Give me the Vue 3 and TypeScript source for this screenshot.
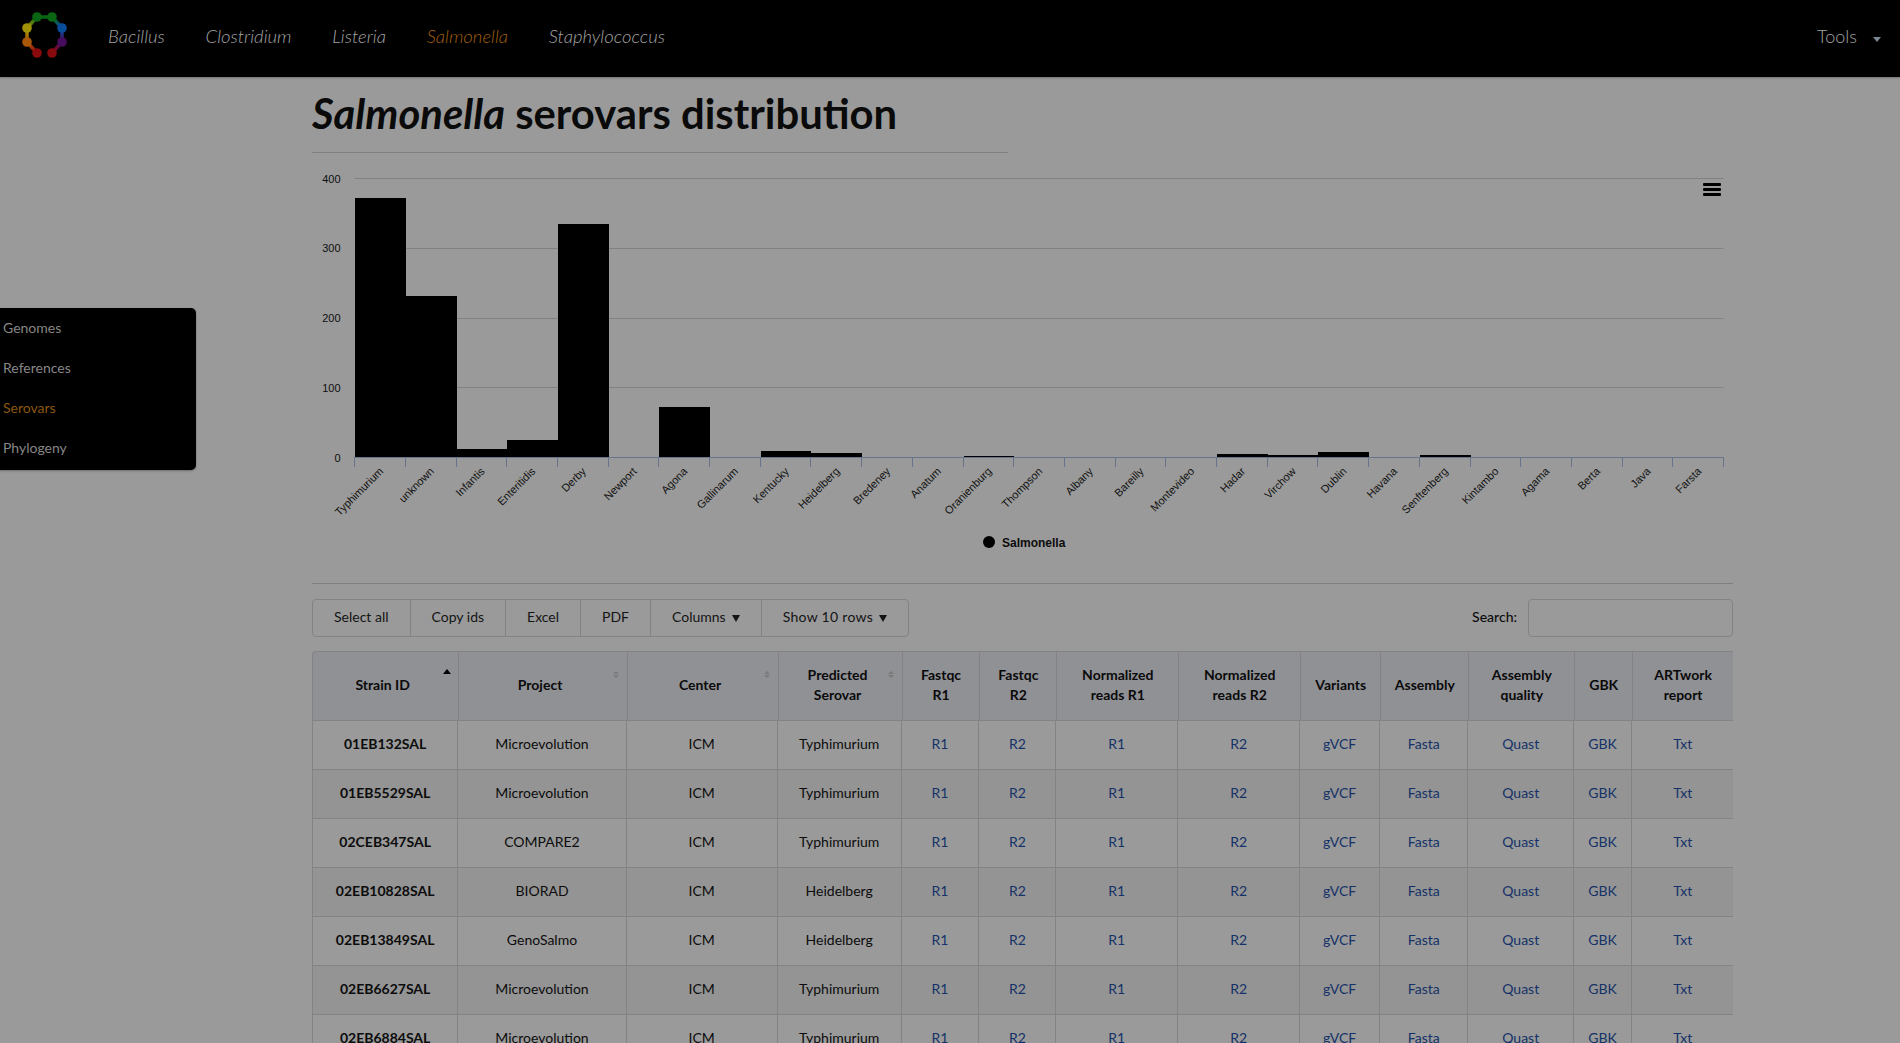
<script setup lang="ts">
interface Row { id: string; project: string; serovar: string }
interface Head { label: string[]; sort?: 'asc' | 'both' }
interface Tool { label: string; caret?: boolean }

const navLinks = ['Bacillus', 'Clostridium', 'Listeria', 'Salmonella', 'Staphylococcus']
const sideLinks = ['Genomes', 'References', 'Serovars', 'Phylogeny']

const logoPoints = [
  { x: 37, y: 52, c: '#8a0a0c' },
  { x: 27, y: 41, c: '#a85808' },
  { x: 27, y: 27, c: '#a09208' },
  { x: 37, y: 16, c: '#0a6612' },
  { x: 52, y: 16, c: '#0a6612' },
  { x: 62, y: 27, c: '#0a4c9c' },
  { x: 62, y: 41, c: '#460c5e' },
  { x: 52, y: 52, c: '#860a0e' }
]
const logoSegs = logoPoints.slice(0, -1).map((p, i) => ({ a: p, b: logoPoints[i + 1], id: 'lg' + i }))

const cats: [string, number][] = [
  ['Typhimurium', 372], ['unknown', 231], ['Infantis', 11], ['Enteritidis', 24], ['Derby', 334],
  ['Newport', 0], ['Agona', 71], ['Gallinarum', 0], ['Kentucky', 8], ['Heidelberg', 6],
  ['Bredeney', 0], ['Anatum', 0], ['Oranienburg', 2], ['Thompson', 0], ['Albany', 0],
  ['Bareilly', 0], ['Montevideo', 0], ['Hadar', 5], ['Virchow', 3], ['Dublin', 7],
  ['Havana', 0], ['Senftenberg', 3], ['Kintambo', 0], ['Agama', 0], ['Berta', 0],
  ['Java', 0], ['Farsta', 0]
]
const x0 = 42.6
const barX0 = 43.1
const step = 50.7
const y0 = 291
const axisY = 291
const unit = 0.6975
const chartW = 1420
const grid = [100, 200, 300, 400]
const yLabels = [0, 100, 200, 300, 400]
const edge = (i: number): number => Math.round(barX0 + i * step)
const gridY = (v: number): number => Math.round(y0 - v * unit) + 0.5
const ticks = Array.from({ length: cats.length + 1 }, (_, i) => edge(i) - 0.5)
const bars = cats.map((c, i) => {
  const top = Math.round(y0 - c[1] * unit)
  return { name: c[0], x: edge(i), w: edge(i + 1) - edge(i), y: top, h: axisY - top, cx: x0 + (i + 0.5) * step + 4 }
})

const tools: Tool[] = [
  { label: 'Select all' },
  { label: 'Copy ids' },
  { label: 'Excel' },
  { label: 'PDF' },
  { label: 'Columns', caret: true },
  { label: 'Show 10 rows', caret: true }
]

const heads: Head[] = [
  { label: ['Strain ID'], sort: 'asc' },
  { label: ['Project'], sort: 'both' },
  { label: ['Center'], sort: 'both' },
  { label: ['Predicted', 'Serovar'], sort: 'both' },
  { label: ['Fastqc', 'R1'] },
  { label: ['Fastqc', 'R2'] },
  { label: ['Normalized', 'reads R1'] },
  { label: ['Normalized', 'reads R2'] },
  { label: ['Variants'] },
  { label: ['Assembly'] },
  { label: ['Assembly', 'quality'] },
  { label: ['GBK'] },
  { label: ['ARTwork', 'report'] }
]
const links = ['R1', 'R2', 'R1', 'R2', 'gVCF', 'Fasta', 'Quast', 'GBK', 'Txt']
const rows: Row[] = [
  { id: '01EB132SAL', project: 'Microevolution', serovar: 'Typhimurium' },
  { id: '01EB5529SAL', project: 'Microevolution', serovar: 'Typhimurium' },
  { id: '02CEB347SAL', project: 'COMPARE2', serovar: 'Typhimurium' },
  { id: '02EB10828SAL', project: 'BIORAD', serovar: 'Heidelberg' },
  { id: '02EB13849SAL', project: 'GenoSalmo', serovar: 'Heidelberg' },
  { id: '02EB6627SAL', project: 'Microevolution', serovar: 'Typhimurium' },
  { id: '02EB6884SAL', project: 'Microevolution', serovar: 'Typhimurium' }
]
</script>

<template>
  <div class="page">
    <header class="navbar">
      <svg class="logo" width="90" height="70" viewBox="0 0 90 70">
        <defs>
          <linearGradient v-for="s in logoSegs" :id="s.id" :key="s.id" gradientUnits="userSpaceOnUse" :x1="s.a.x" :y1="s.a.y" :x2="s.b.x" :y2="s.b.y">
            <stop offset="0" :stop-color="s.a.c" />
            <stop offset="1" :stop-color="s.b.c" />
          </linearGradient>
        </defs>
        <line v-for="s in logoSegs" :key="s.id + 'l'" :x1="s.a.x" :y1="s.a.y" :x2="s.b.x" :y2="s.b.y" :stroke="`url(#${s.id})`" stroke-width="3.5" />
        <circle v-for="p in logoPoints" :key="p.x + '-' + p.y" :cx="p.x" :cy="p.y" r="4.8" :fill="p.c" />
      </svg>
      <nav class="nav-links">
        <a v-for="l in navLinks" :key="l" class="nav-link" :class="{ active: l === 'Salmonella' }">{{ l }}</a>
      </nav>
      <div class="tools">
        <span>Tools</span>
        <i class="caret"></i>
      </div>
    </header>

    <aside class="sidebar">
      <a v-for="s in sideLinks" :key="s" class="side-link" :class="{ active: s === 'Serovars' }">{{ s }}</a>
    </aside>

    <main class="content">
      <div class="title-block">
        <h1 class="title"><em>Salmonella</em> serovars distribution</h1>
      </div>

      <svg class="chart" :width="chartW" height="400" :viewBox="`0 0 ${chartW} 400`">
        <line v-for="g in grid" :key="g" :x1="x0" :x2="1411.5" :y1="gridY(g)" :y2="gridY(g)" stroke="#828282" stroke-width="1" />
        <text v-for="l in yLabels" :key="'y' + l" class="ylab" x="28.5" :y="292 - l * unit + 3.5" text-anchor="end">{{ l }}</text>
        <rect v-for="b in bars" :key="b.name" :x="b.x" :y="b.y" :width="b.w" :height="b.h" fill="#000" />
        <line :x1="x0" x2="1411.7" y1="291.5" y2="291.5" stroke="#67758c" stroke-width="1" />
        <line v-for="t in ticks" :key="'t' + t" :x1="t" :x2="t" y1="291" y2="301" stroke="#67758c" stroke-width="1" />
        <text
          v-for="b in bars"
          :key="'l' + b.name"
          class="xlab"
          text-anchor="end"
          :x="b.cx"
          y="306"
          :transform="`rotate(-45 ${b.cx} 306)`"
        >{{ b.name }}</text>
        <circle cx="677" cy="376" r="6" fill="#000" />
        <text class="legend" x="690" y="380.5">Salmonella</text>
        <g fill="#000">
          <rect x="1391" y="17" width="18" height="3" rx="1" />
          <rect x="1391" y="22" width="18" height="3" rx="1" />
          <rect x="1391" y="27" width="18" height="3" rx="1" />
        </g>
      </svg>

      <hr class="rule" />

      <div class="toolbar">
        <div class="btn-group">
          <button v-for="t in tools" :key="t.label" class="btn">
            <span class="btn-label">{{ t.label }}</span><i v-if="t.caret" class="btn-caret"></i>
          </button>
        </div>
        <label class="search">
          <span class="search-label">Search:</span>
          <input class="search-input" type="text" />
        </label>
      </div>

      <div class="table">
        <div class="grid head">
          <div v-for="h in heads" :key="h.label.join()" class="th" :class="{ sortable: h.sort }">
            <div class="th-text">
              <span v-for="l in h.label" :key="l">{{ l }}</span>
            </div>
            <span v-if="h.sort === 'asc'" class="sort-asc"></span>
            <span v-if="h.sort === 'both'" class="sort-both"><i class="up"></i><i class="down"></i></span>
          </div>
        </div>
        <div v-for="r in rows" :key="r.id" class="grid body">
          <div class="td strong">{{ r.id }}</div>
          <div class="td">{{ r.project }}</div>
          <div class="td">ICM</div>
          <div class="td">{{ r.serovar }}</div>
          <div v-for="(l, i) in links" :key="i" class="td"><a class="link">{{ l }}</a></div>
        </div>
      </div>
    </main>
  </div>
</template>

<style>
html, body { margin: 0; padding: 0; background: #9a9a9a; overflow: hidden; }
</style>

<style scoped>
.page {
  position: relative;
  height: 1043px;
  overflow: hidden;
  background: #9a9a9a;
  font-family: Lato, "Open Sans", sans-serif;
  font-size: 14px;
  color: #0c0c0c;
}
.navbar {
  height: 77px;
  background: #000;
  display: flex;
  align-items: center;
  box-shadow: 0 1px 2px rgba(0, 0, 0, 0.25);
}
.logo { flex: none; align-self: flex-start; margin-top: 1px; }
.nav-links { display: flex; margin-left: 18px; }
.nav-link {
  font-size: 18.5px;
  font-style: italic;
  font-weight: 300;
  color: #a3a3a3;
  margin-right: 40.7px;
  line-height: 24px;
  margin-top: -6px;
}
.nav-link.active { color: #a05f0e; }
.tools {
  margin-left: auto;
  margin-top: -6px;
  display: flex;
  align-items: center;
  font-size: 18px;
  font-weight: 300;
  color: #a3a3a3;
  padding-right: 19px;
}
.caret {
  display: block;
  width: 0;
  height: 0;
  margin-left: 16px;
  margin-top: 8px;
  border-left: 4.5px solid transparent;
  border-right: 4.5px solid transparent;
  border-top: 5px solid #7d8896;
}
.sidebar {
  position: absolute;
  left: 0;
  top: 308px;
  width: 196px;
  height: 162px;
  background: #000;
  border-radius: 0 5px 5px 0;
  box-shadow: 0 1px 2px rgba(0, 0, 0, 0.3);
  display: flex;
  flex-direction: column;
  justify-content: center;
  padding-bottom: 2px;
  box-sizing: border-box;
}
.side-link {
  height: 40px;
  line-height: 40px;
  padding-left: 3px;
  font-size: 14px;
  color: #868686;
}
.side-link.active { color: #8c5610; }
.content { margin-left: 312px; width: 1421px; }
.title-block {
  width: 696px;
  height: 76px;
  border-bottom: 1px solid #7e7e7e;
  box-sizing: border-box;
}
.title {
  margin: 0;
  padding-top: 8px;
  font-size: 41.8px;
  line-height: 56px;
  font-weight: 700;
  color: #0a0a0a;
  white-space: nowrap;
}
.chart { display: block; margin-top: 13px; }
.ylab { font: 11px "Liberation Sans", Arial, sans-serif; fill: #0f0f0f; }
.xlab { font: 11px "Liberation Sans", Arial, sans-serif; fill: #111; }
.legend { font: bold 12px "Liberation Sans", Arial, sans-serif; fill: #0c0c0c; }
.rule { margin: 17px 0 0; border: 0; border-top: 1px solid #7e7e7e; }
.toolbar {
  margin-top: 15px;
  display: flex;
  justify-content: space-between;
  align-items: center;
}
.btn-group {
  display: flex;
  border: 1px solid #838383;
  border-radius: 4px;
  height: 38px;
  box-sizing: border-box;
}
.btn {
  display: flex;
  align-items: center;
  background: none;
  border: 0;
  border-right: 1px solid #838383;
  font: inherit;
  color: #141414;
  padding: 0 21px 4px;
  white-space: nowrap;
}
.btn:last-child { border-right: 0; }
.btn:last-child .btn-label { letter-spacing: 0.3px; }
.btn-caret {
  display: block;
  width: 0;
  height: 0;
  margin-left: 6px;
  margin-top: 4px;
  border-left: 4px solid transparent;
  border-right: 4px solid transparent;
  border-top: 7px solid #141414;
}
.search { display: flex; align-items: center; gap: 10.5px; font-weight: 500; color: #0c0c0c; }
.search-label { padding-bottom: 4px; margin-right: 0.5px; }
.search-input {
  width: 205px;
  height: 38px;
  box-sizing: border-box;
  background: none;
  border: 1px solid #838383;
  border-radius: 4px;
}
.table { margin-top: 14px; }
.grid { display: grid; }
.head {
  grid-template-columns: 146.3px 168.5px 151.5px 123.5px 77.5px 77.2px 121.7px 122.1px 80px 88.2px 105.7px 58.2px 99.6px;
  background: #909195;
  border-top: 1px solid #838383;
  border-left: 1px solid #838383;
  border-bottom: 1px solid #838383;
  border-top-left-radius: 4px;
  height: 70px;
  box-sizing: border-box;
}
.th {
  position: relative;
  display: flex;
  align-items: center;
  justify-content: center;
  padding-bottom: 2px;
  box-sizing: border-box;
  border-right: 1px solid #838383;
  font-weight: 700;
  line-height: 20px;
  text-align: center;
  color: #0a0a0a;
}
.th:last-child { border-right: 0; }
.th.sortable { padding-right: 6px; }
.th-text { display: flex; flex-direction: column; }
.sort-asc {
  position: absolute;
  right: 7px;
  top: 17px;
  width: 0;
  height: 0;
  border-left: 4.5px solid transparent;
  border-right: 4.5px solid transparent;
  border-bottom: 5px solid #000;
}
.sort-both {
  position: absolute;
  right: 8px;
  top: 19px;
  display: flex;
  flex-direction: column;
  gap: 1px;
}
.sort-both i {
  display: block;
  width: 0;
  height: 0;
  border-left: 3px solid transparent;
  border-right: 3px solid transparent;
}
.sort-both .up { border-bottom: 3px solid #7a7a7a; }
.sort-both .down { border-top: 3px solid #7a7a7a; }
.body {
  grid-template-columns: 145.3px 168.4px 151px 124px 77.6px 77.1px 121.7px 122.2px 79.9px 88.3px 105.6px 58.2px 101.1px;
  height: 49px;
  box-sizing: border-box;
  border-left: 1px solid #838383;
  border-bottom: 1px solid #838383;
  background: #9a9a9a;
}
.body:nth-child(odd) { background: #949494; }
.td {
  display: flex;
  align-items: center;
  justify-content: center;
  padding-bottom: 4px;
  box-sizing: border-box;
  border-right: 1px solid #838383;
  color: #0c0c0c;
}
.td:last-child { border-right: 0; }
.strong { font-weight: 700; }
.link { color: #143268; }
</style>
